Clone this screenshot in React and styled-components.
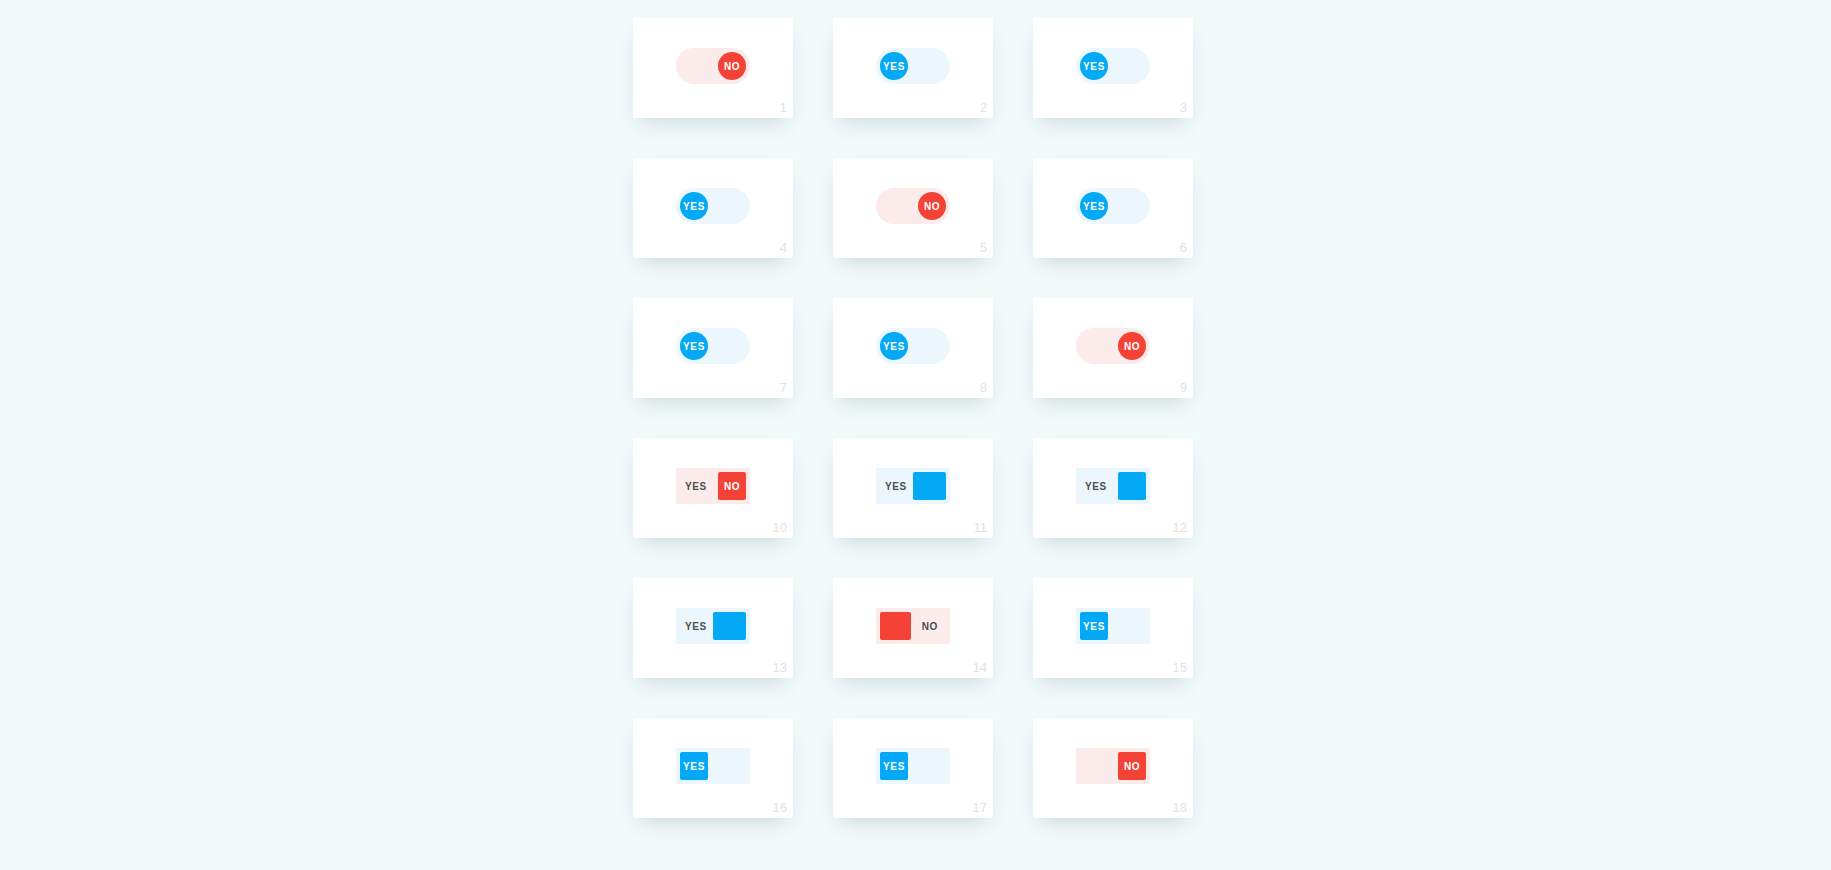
import React from 'react';
import styled, { createGlobalStyle } from 'styled-components';

// palette
const BLUE = '#03a9f4';
const RED = '#f44336';
const TRACK = { blue: '#ebf7fc', red: '#fcebeb' };

const GlobalStyle = createGlobalStyle`
  html, body {
    margin: 0;
    padding: 0;
    background: #f1f9f9;
    font-family: "Liberation Sans", Arial, sans-serif;
  }
`;

const Page = styled.main`
  display: grid;
  grid-template-columns: repeat(3, 160px);
  grid-auto-rows: 100px;
  gap: 40px;
  justify-content: center;
  padding: 18px 5px 52px 0;
`;

const Card = styled.div`
  position: relative;
  display: flex;
  flex-direction: column;
  align-items: center;
  padding-top: 30px;
  box-sizing: border-box;
  background: #fff;
  border-radius: 2px;
  box-shadow: 0 10px 20px -8px #c5d6d6;
`;

const Counter = styled.span`
  position: absolute;
  right: 6px;
  bottom: 3px;
  font-size: 13px;
  line-height: 15px;
  color: #e2e2e2;
`;

const Track = styled.div`
  display: flex;
  align-items: center;
  box-sizing: border-box;
  width: 74px;
  height: 36px;
  padding: 4px;
  border-radius: ${p => (p.$round ? '100px' : '2px')};
  background: ${p => TRACK[p.$tone]};
`;

const Knob = styled.div`
  display: flex;
  align-items: center;
  justify-content: center;
  flex: none;
  box-sizing: border-box;
  width: ${p => p.$w}px;
  height: 28px;
  padding-top: 1px;
  margin-left: ${p => (p.$right ? 'auto' : '0')};
  border-radius: ${p => (p.$round ? '50%' : '2px')};
  background: ${p => (p.$tone === 'blue' ? BLUE : RED)};
  color: #fff;
  font-size: 10px;
  font-weight: bold;
  letter-spacing: 0.6px;
  line-height: 1;
`;

const SideLabel = styled.span`
  padding: ${p => (p.$after ? '1px 8px 0 0' : '1px 0 0 5px')};
  margin-left: ${p => (p.$after ? 'auto' : '0')};
  color: #4e4e4e;
  font-size: 10px;
  font-weight: bold;
  letter-spacing: 0.6px;
  line-height: 1;
`;

const switches = [
  { round: true, tone: 'red', right: true, text: 'NO' },
  { round: true, tone: 'blue', text: 'YES' },
  { round: true, tone: 'blue', text: 'YES' },
  { round: true, tone: 'blue', text: 'YES' },
  { round: true, tone: 'red', right: true, text: 'NO' },
  { round: true, tone: 'blue', text: 'YES' },
  { round: true, tone: 'blue', text: 'YES' },
  { round: true, tone: 'blue', text: 'YES' },
  { round: true, tone: 'red', right: true, text: 'NO' },
  { tone: 'red', right: true, text: 'NO', before: 'YES' },
  { tone: 'blue', right: true, w: 33, before: 'YES' },
  { tone: 'blue', right: true, before: 'YES' },
  { tone: 'blue', right: true, w: 33, before: 'YES' },
  { tone: 'red', w: 31, after: 'NO' },
  { tone: 'blue', text: 'YES' },
  { tone: 'blue', text: 'YES' },
  { tone: 'blue', text: 'YES' },
  { tone: 'red', right: true, text: 'NO' },
];

function Toggle({ round, tone, right, text, w = 28, before, after }) {
  return (
    <Track $round={round} $tone={tone}>
      {before && <SideLabel>{before}</SideLabel>}
      <Knob $round={round} $tone={tone} $right={right} $w={w}>
        {text}
      </Knob>
      {after && <SideLabel $after>{after}</SideLabel>}
    </Track>
  );
}

export default function App() {
  return (
    <>
      <GlobalStyle />
      <Page>
        {switches.map((s, i) => (
          <Card key={i}>
            <Toggle {...s} />
            <Counter>{i + 1}</Counter>
          </Card>
        ))}
      </Page>
    </>
  );
}
